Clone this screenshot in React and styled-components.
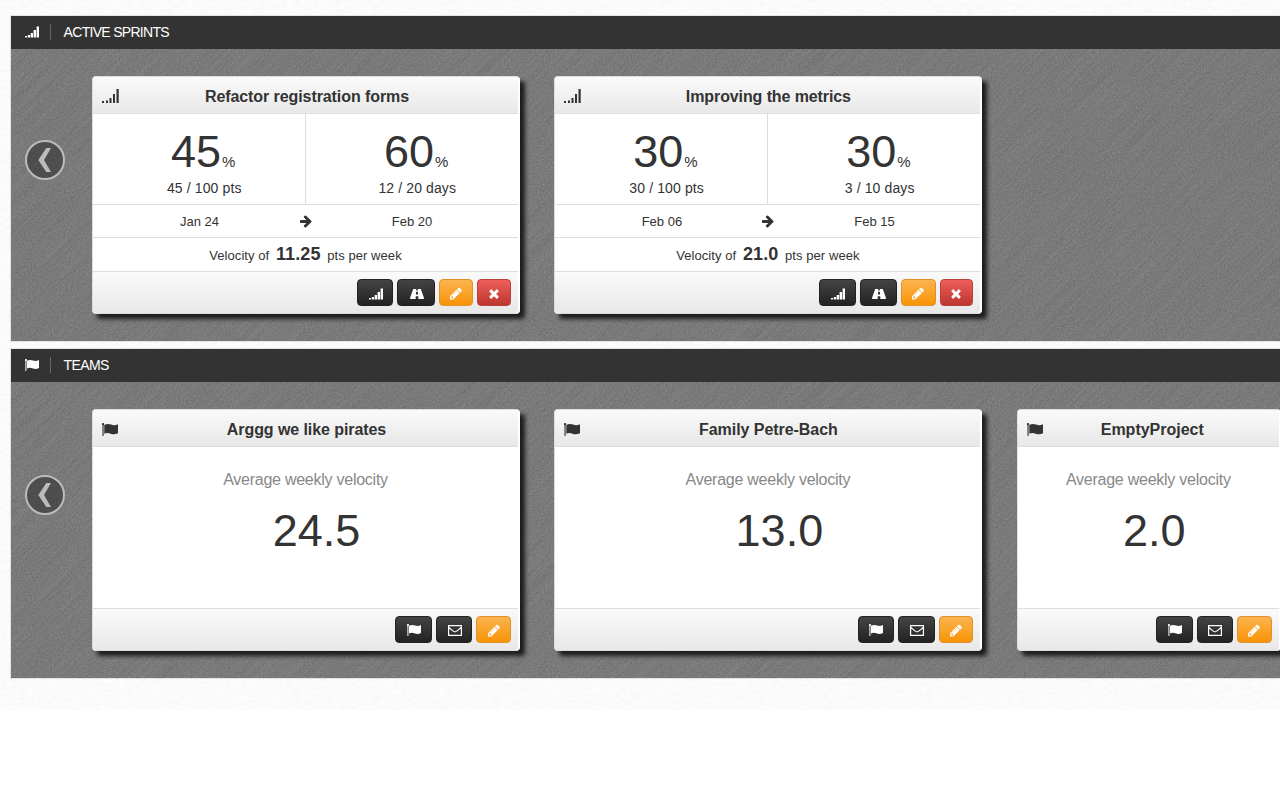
import React from "react";
import styled, { createGlobalStyle, css } from "styled-components";

const svgUrl = (markup) => `url("data:image/svg+xml,${encodeURIComponent(markup)}")`;

const brushed = svgUrl(
  `<svg xmlns="http://www.w3.org/2000/svg" width="1280" height="340" color-interpolation-filters="sRGB"><filter id="a" x="0" y="0" width="100%" height="100%"><feTurbulence type="fractalNoise" baseFrequency="0.012 0.5" numOctaves="2" seed="4"/><feColorMatrix values="0.12 0 0 0 0.42  0.12 0 0 0 0.42  0.12 0 0 0 0.42  0 0 0 0 1"/></filter><filter id="b" x="0" y="0" width="100%" height="100%"><feTurbulence type="fractalNoise" baseFrequency="0.6" numOctaves="2" seed="9"/><feColorMatrix values="0.26 0 0 0 0.35  0.26 0 0 0 0.35  0.26 0 0 0 0.35  0 0 0 0 1"/></filter><rect width="1280" height="340" fill="#7a7a7a"/><g transform="rotate(-45 640 170)"><rect x="-200" y="-700" width="1700" height="1700" filter="url(#a)"/></g><rect width="1280" height="340" filter="url(#b)" opacity="0.5"/></svg>`
);

const paper = svgUrl(
  `<svg xmlns="http://www.w3.org/2000/svg" width="1280" height="710" color-interpolation-filters="sRGB"><filter id="p" x="0" y="0" width="100%" height="100%"><feTurbulence type="fractalNoise" baseFrequency="0.15 0.3" numOctaves="2" seed="2"/><feColorMatrix values="0.035 0 0 0 0.966  0.035 0 0 0 0.966  0.035 0 0 0 0.966  0 0 0 0 1"/></filter><rect width="1280" height="710" filter="url(#p)"/></svg>`
);

const Global = createGlobalStyle`
  * { box-sizing: border-box; }
  body {
    margin: 0;
    background: #fff;
    color: #333;
    font: 14px/20px "Liberation Sans", Arial, sans-serif;
    overflow: hidden;
  }
`;

const Page = styled.main`
  display: flex;
  flex-direction: column;
  gap: 8px;
  width: 1280px;
  height: 710px;
  padding: 16px 0 0 11px;
  overflow: hidden;
  background: #fbfbfb ${paper};
`;

const Section = styled.section`
  flex: none;
  height: ${(p) => p.$height}px;
  box-shadow: 0 0 0 1px #e4e4e4;
`;

const SectionBar = styled.header`
  display: flex;
  align-items: center;
  height: 33px;
  padding: 0 0 1px 14px;
  background: #333;
  color: #fff;
`;

const BarTitle = styled.h2`
  margin: 0 0 0 11px;
  padding-left: 12.6px;
  height: 16px;
  border-left: 1px solid #666;
  font-size: 14px;
  font-weight: 400;
  line-height: 16px;
  letter-spacing: ${(p) => p.$spacing || 0}px;
`;

const Shelf = styled.div`
  display: flex;
  align-items: flex-start;
  height: calc(100% - 33px);
  padding: 27px 0 0 14px;
  overflow: hidden;
  background: #7a7a7a ${brushed};
`;

const PrevButton = styled.button`
  flex: none;
  width: 40px;
  height: 40px;
  margin: ${(p) => p.$top}px 27px 0 0;
  padding: 0;
  border: 2px solid #bbb;
  border-radius: 50%;
  background: rgba(34, 34, 34, 0.5);
`;

const Cards = styled.div`
  display: flex;
  gap: 34.4px;
`;

const Card = styled.article`
  display: flex;
  flex: none;
  flex-direction: column;
  width: ${(p) => p.$width || 428}px;
  height: ${(p) => p.$height}px;
  padding-right: 1px;
  border: 1px solid #ddd;
  border-right-color: #fff;
  border-radius: 4px;
  background: #fff;
  box-shadow: 5px 5px 4px #1c1d1e;
`;

const shade = css`
  background: linear-gradient(#fafafa, #e8e8e8);
`;

const CardHead = styled.header`
  display: flex;
  align-items: center;
  height: 37px;
  padding: 3px 0 0 9px;
  border-bottom: 1px solid #ddd;
  border-radius: 3px 3px 0 0;
  ${shade}
`;

const CardTitle = styled.h3`
  flex: 1;
  margin: 0;
  padding: 1px ${(p) => p.$shift || 23}px 0 0;
  text-align: center;
  font-size: 16px;
  line-height: 20px;
  letter-spacing: ${(p) => p.$spacing || 0}px;
`;

const Row = styled.div`
  display: flex;
  align-items: center;
  height: ${(p) => p.$height}px;
  border-bottom: 1px solid #ddd;
`;

const Stat = styled.div`
  flex: 1;
  height: 90px;
  padding-top: 13px;
  text-align: center;
  & + & { border-left: 1px solid #ddd; }
`;

const Figure = styled.div`
  padding-left: ${(p) => p.$indent || 0}px;
  font-size: 45px;
  line-height: 50px;
  small { margin-left: 1px; font-size: 15px; line-height: 16px; letter-spacing: -0.2px; }
`;

const Detail = styled.div`
  margin-top: 1px;
  padding-left: 10.5px;
  letter-spacing: 0.12px;
`;

const DateText = styled.span`
  width: ${(p) => p.$width}px;
  padding-top: 1px;
  text-align: center;
  font-size: 13px;
`;

const DateArrow = styled.span`
  margin: 0 1px 0 -7.4px;
`;

const Velocity = styled.p`
  flex: 1;
  margin: 0;
  text-align: center;
  font-size: 13px;
  letter-spacing: 0.07px;
  b { margin: 0 3px; font-size: 18px; letter-spacing: 0.1px; }
`;

const Average = styled.div`
  flex: 1;
  padding-top: 23px;
  border-bottom: 1px solid #ddd;
  text-align: center;
`;

const AverageLabel = styled.div`
  margin-bottom: 16px;
  color: #888;
  font-size: 16px;
  letter-spacing: -0.25px;
`;

const CardFoot = styled.footer`
  display: flex;
  justify-content: flex-end;
  gap: 4px;
  height: 41px;
  padding: 7px 7px 0 0;
  border-radius: 0 0 3px 3px;
  ${shade}
`;

const tones = {
  dark: ["#444", "#222", "#222"],
  orange: ["#fbb450", "#f89406", "#e0922a"],
  red: ["#ee5f5b", "#bd362f", "#b9403b"],
};

const Action = styled.button`
  display: flex;
  align-items: center;
  justify-content: center;
  width: ${(p) => p.$width}px;
  height: 27px;
  padding: 2px 0 0 ${(p) => (p.$tone === "dark" ? 1 : 0)}px;
  border: 1px solid ${(p) => tones[p.$tone][2]};
  border-radius: 4px;
  background: linear-gradient(${(p) => tones[p.$tone][0]}, ${(p) => tones[p.$tone][1]});
  color: #fff;
`;

const Svg = styled.svg`
  display: block;
  flex: none;
  fill: currentColor;
`;

const Signal = ({ large }) =>
  large ? (
    <Svg width="17" height="15" viewBox="0 0 17 15">
      <path d="M0 12h2v2H0zM4 11.500h2V14H4zM7.500 9h2v5h-2zM11 5h2v9h-2zM14.500 0h2.200v14h-2.200z" />
    </Svg>
  ) : (
    <Svg width="14" height="12" viewBox="0 0 14 12">
      <path d="M0 10h2v1.500H0zM2.800 9h2.300v2.500H2.800zM5.700 7H8v4.500H5.700zM8.600 4h2.400v7.500H8.600zM11.600 .500H14v11h-2.400z" />
    </Svg>
  );

const Flag = ({ size = 14 }) => (
  <Svg width={size} height={size * 0.86} viewBox="0 0 14 12">
    <path d="M.400.300h1V12h-1zM2 1.800C4 .700 6 .700 8 1.400s3.800.700 6-.400v8c-2 1-4 1.200-6 .500S4 8.300 2 9.400z" />
    <circle cx="1" cy="1" r="1" />
  </Svg>
);

const Road = () => (
  <Svg width="14" height="10" viewBox="0 0 14 10">
    <path fillRule="evenodd" d="M3.200 0h3l-.100 1.600h1.800L7.800 0h3L14 9c.100.600-.100 1-.500 1H8.400l-.200-2.800H5.800L5.600 10H.500c-.400 0-.600-.400-.500-1zM6.100 2.700l-.200 2.700h2.200l-.200-2.700z" />
  </Svg>
);

const Pencil = () => (
  <Svg width="14" height="14" viewBox="0 64 1792 1792">
    <path d="M491 1536l91-91-235-235-91 91v107h128v128h107zm523-928q0-22-22-22-10 0-17 7l-542 542q-7 7-7 17 0 22 22 22 10 0 17-7l542-542q7-7 7-17zm-54-192l416 416-832 832h-416v-416zm683 96q0 53-37 90l-166 166-416-416 166-165q36-38 90-38 53 0 91 38l235 234q37 39 37 91z" />
  </Svg>
);

const Times = () => (
  <Svg width="14" height="14" viewBox="0 64 1792 1792">
    <path d="M1490 1322q0 40-28 68l-136 136q-28 28-68 28t-68-28l-294-294-294 294q-28 28-68 28t-68-28l-136-136q-28-28-28-68t28-68l294-294-294-294q-28-28-28-68t28-68l136-136q28-28 68-28t68 28l294 294 294-294q28-28 68-28t68 28l136 136q28 28 28 68t-28 68l-294 294 294 294q28 28 28 68z" />
  </Svg>
);

const Envelope = () => (
  <Svg width="14" height="11" viewBox="0 0 14 11">
    <path d="M.600.600h12.800v9.800H.600zM.600 2.200C3 4.200 5 6.800 7 6.800s4-2.600 6.400-4.600" fill="none" stroke="currentColor" strokeWidth="1.200" />
  </Svg>
);

const Arrow = () => (
  <Svg width="14" height="14" viewBox="0 0 1792 1792">
    <path d="M1600 960q0 54-37 91l-651 651q-39 37-91 37-51 0-90-37l-75-75q-38-38-38-91t38-91l293-293h-704q-52 0-84.500-37.500t-32.500-90.500v-128q0-53 32.500-90.500t84.500-37.500h704l-293-294q-38-36-38-90t38-90l75-75q38-38 90-38 53 0 91 38l651 651q37 35 37 90z" />
  </Svg>
);

const Previous = ({ top }) => (
  <PrevButton $top={top} aria-label="Previous">
    <Svg width="36" height="36" viewBox="2 2 36 36">
      <path fill="#bbb" d="M21.300 8H26l-7 12 7 12h-4.700l-8-12z" />
    </Svg>
  </PrevButton>
);

const sprints = [
  { name: "Refactor registration forms", spacing: -0.08, done: 45, points: "45 / 100 pts", elapsed: 60, days: "12 / 20 days", from: "Jan 24", to: "Feb 20", velocity: "11.25" },
  { name: "Improving the metrics", spacing: -0.1, shift: 25, done: 30, points: "30 / 100 pts", elapsed: 30, days: "3 / 10 days", from: "Feb 06", to: "Feb 15", velocity: "21.0" },
];

const teams = [
  { name: "Arggg we like pirates", spacing: -0.08, velocity: "24.5", indent: 22 },
  { name: "Family Petre-Bach", spacing: -0.05, shift: 24, velocity: "13.0", indent: 23 },
  { name: "EmptyProject", velocity: "2.0", indent: 12, width: 264, shift: 17 },
];

function SprintCard({ sprint }) {
  return (
    <Card $height={238}>
      <CardHead>
        <Signal large />
        <CardTitle $shift={sprint.shift} $spacing={sprint.spacing}>{sprint.name}</CardTitle>
      </CardHead>
      <Row $height={91}>
        <Stat>
          <Figure $indent={8}>{sprint.done}<small>%</small></Figure>
          <Detail>{sprint.points}</Detail>
        </Stat>
        <Stat>
          <Figure $indent={8}>{sprint.elapsed}<small>%</small></Figure>
          <Detail>{sprint.days}</Detail>
        </Stat>
      </Row>
      <Row $height={33}>
        <DateText $width={213}>{sprint.from}</DateText>
        <DateArrow><Arrow /></DateArrow>
        <DateText $width={197}>{sprint.to}</DateText>
      </Row>
      <Row $height={34}>
        <Velocity>Velocity of <b>{sprint.velocity}</b> pts per week</Velocity>
      </Row>
      <CardFoot>
        <Action $tone="dark" $width={36.6}><Signal /></Action>
        <Action $tone="dark" $width={37.4}><Road /></Action>
        <Action $tone="orange" $width={34.5}><Pencil /></Action>
        <Action $tone="red" $width={33.8}><Times /></Action>
      </CardFoot>
    </Card>
  );
}

function TeamCard({ team }) {
  return (
    <Card $height={242} $width={team.width}>
      <CardHead>
        <Flag size={16} />
        <CardTitle $shift={team.shift} $spacing={team.spacing}>{team.name}</CardTitle>
      </CardHead>
      <Average>
        <AverageLabel>Average weekly velocity</AverageLabel>
        <Figure $indent={team.indent}>{team.velocity}</Figure>
      </Average>
      <CardFoot>
        <Action $tone="dark" $width={36.6}><Flag /></Action>
        <Action $tone="dark" $width={36.4}><Envelope /></Action>
        <Action $tone="orange" $width={34.8}><Pencil /></Action>
      </CardFoot>
    </Card>
  );
}

export default function App() {
  return (
    <>
      <Global />
      <Page>
        <Section $height={325}>
          <SectionBar><Signal /><BarTitle $spacing={-0.7}>ACTIVE SPRINTS</BarTitle></SectionBar>
          <Shelf>
            <Previous top={64} />
            <Cards>{sprints.map((s) => <SprintCard key={s.name} sprint={s} />)}</Cards>
          </Shelf>
        </Section>
        <Section $height={329}>
          <SectionBar><Flag /><BarTitle $spacing={-0.6}>TEAMS</BarTitle></SectionBar>
          <Shelf>
            <Previous top={66} />
            <Cards>{teams.map((t) => <TeamCard key={t.name} team={t} />)}</Cards>
          </Shelf>
        </Section>
      </Page>
    </>
  );
}
